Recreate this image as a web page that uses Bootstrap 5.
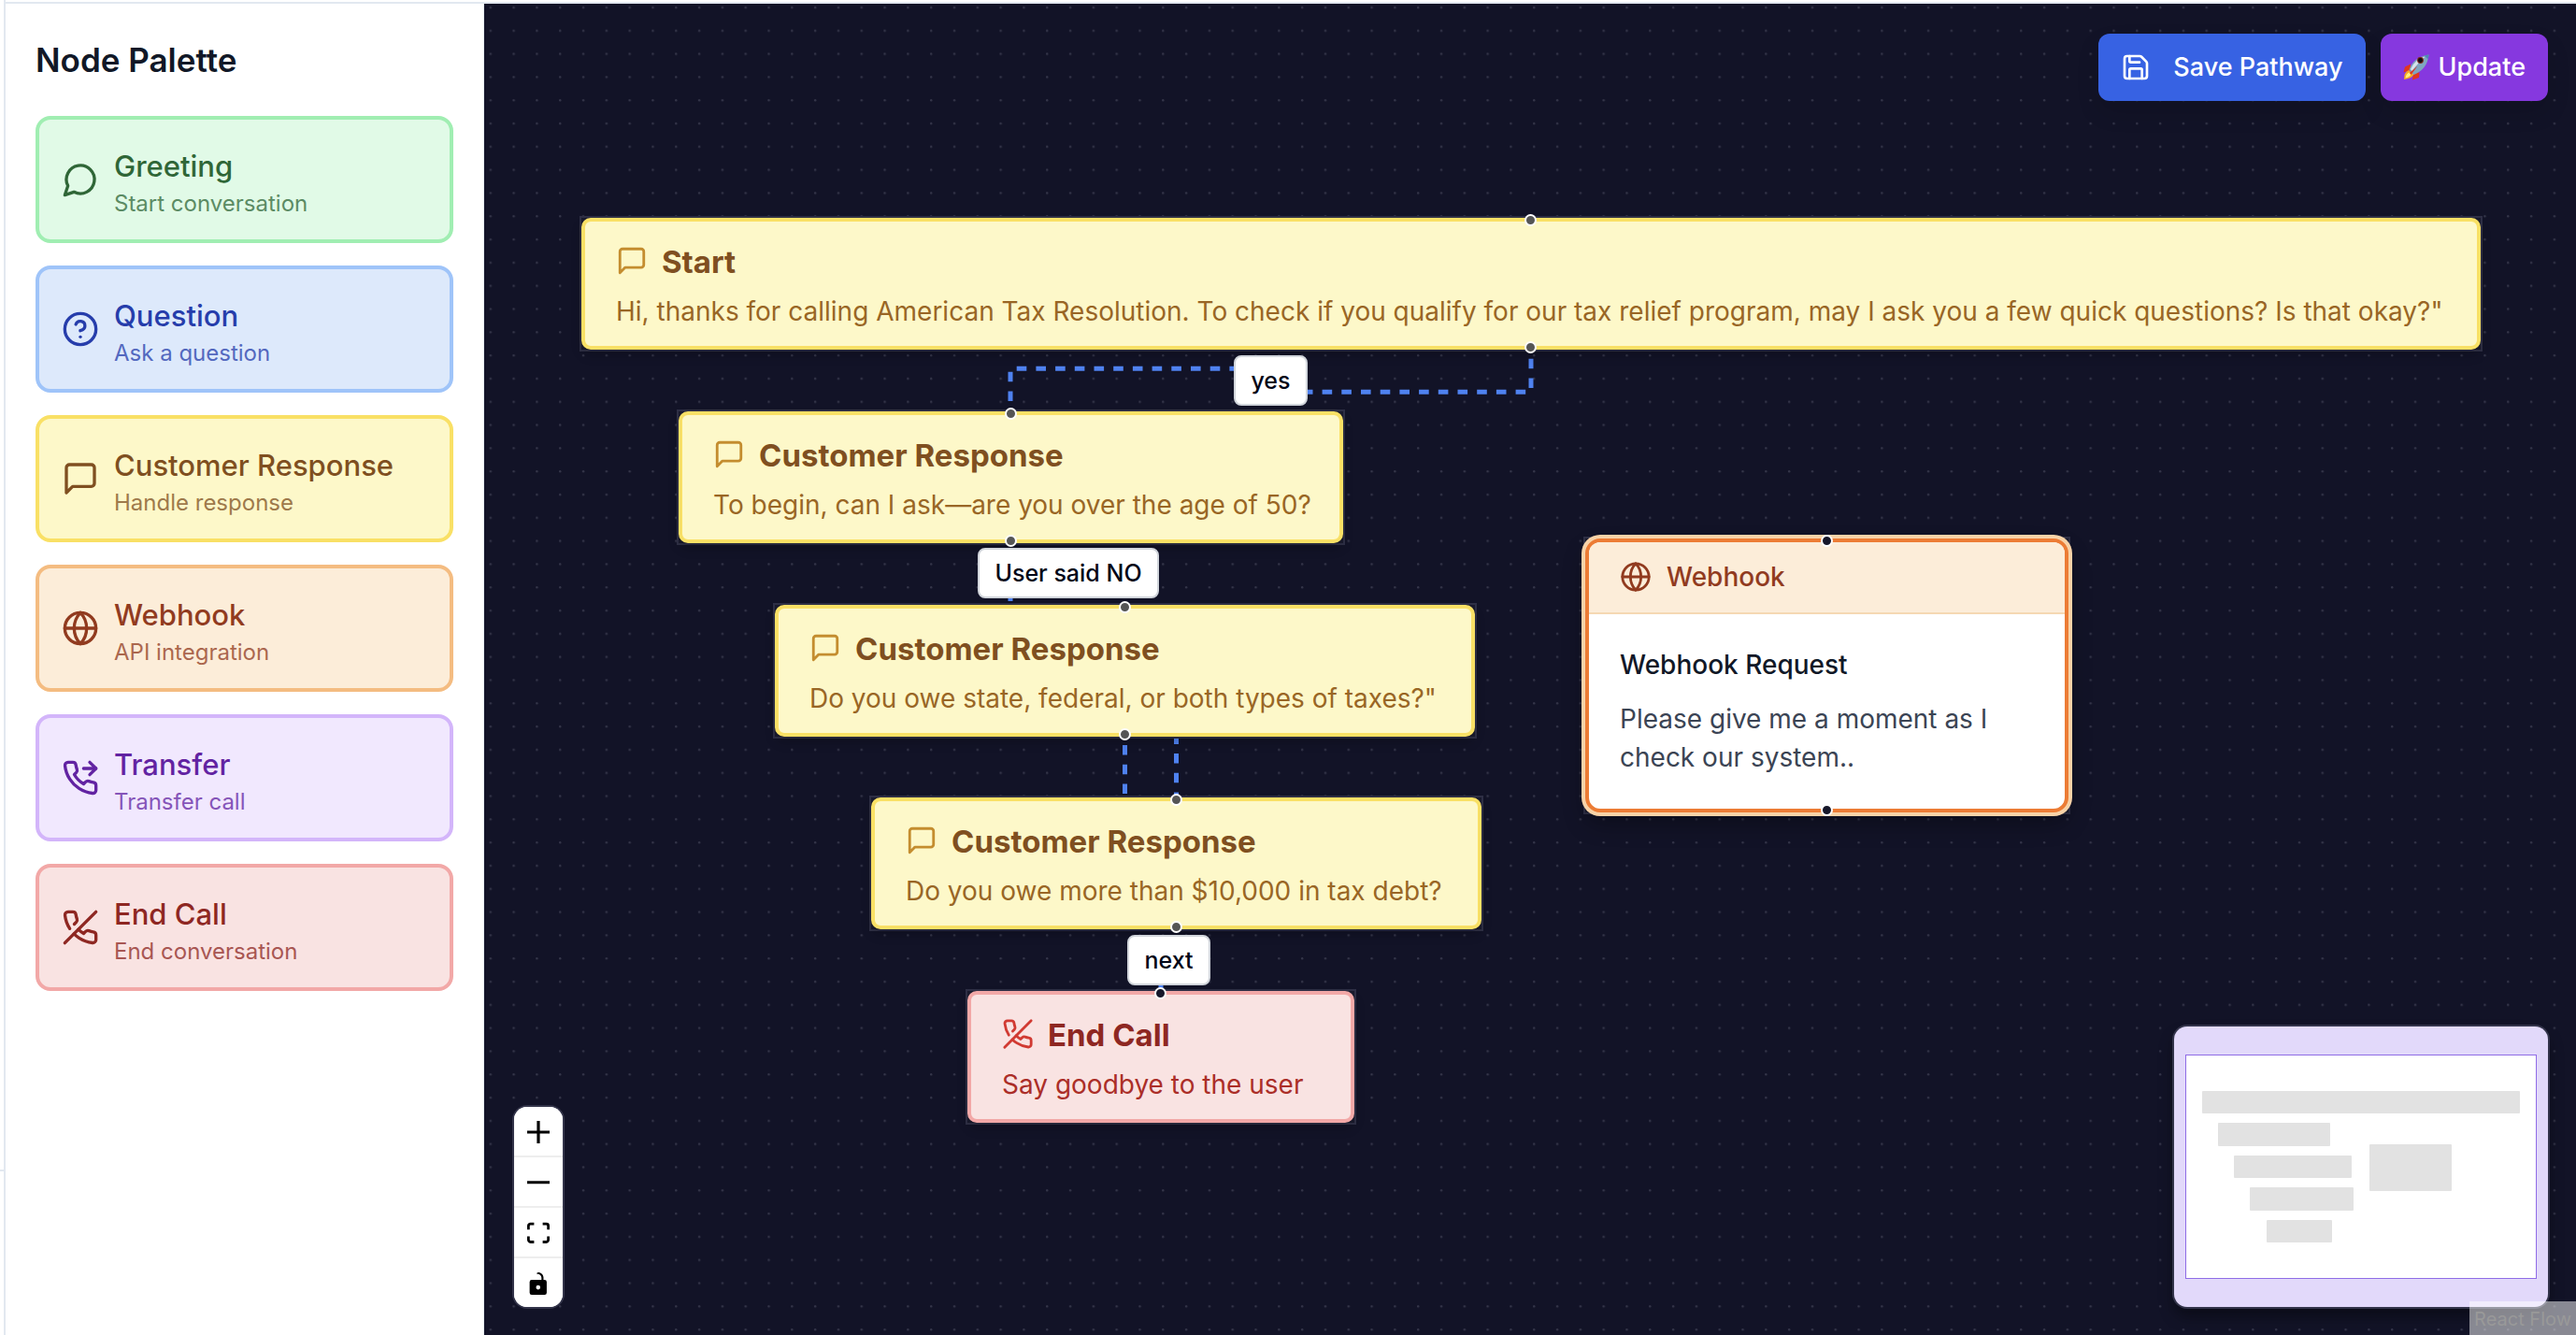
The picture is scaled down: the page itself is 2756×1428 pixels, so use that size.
<!DOCTYPE html>
<html lang="en">
<head>
<meta charset="utf-8">
<meta name="viewport" content="width=device-width, initial-scale=1">
<title>Pathway editor</title>
<link href="https://cdn.jsdelivr.net/npm/bootstrap@5.3.0/dist/css/bootstrap.min.css" rel="stylesheet">
<style>
  body { font-family: Inter, "Liberation Sans", sans-serif; background: #fff; color: #111827; }
  .rail { width: 6px; border-right: 2px solid #e2e8f0; }
  .rail-gap { height: 1253px; border-bottom: 2px solid #e2e8f0; }
  .shell-top { height: 4px; border-bottom: 2px solid #e2e8f0; }
  .ico { fill: none; stroke: currentColor; stroke-width: 2; stroke-linecap: round; stroke-linejoin: round; flex: none; }

  /* Palette */
  .palette { width: 512px; padding: 32px; border-right: 1px solid #e2e8f0; }
  .palette h1 { font-size: 35px; line-height: 56px; font-weight: 600; margin-bottom: 32px; margin-top: 0; }
  .tile { border: 4px solid; border-radius: 16px; min-height: 136px; padding: 20px 24px; gap: 16px; }
  .tile .ico { width: 40px; height: 40px; }
  .tile-copy { padding-top: 3px; }
  .tile-name { font-size: 31px; line-height: 48px; font-weight: 500; }
  .tile-note { font-size: 24px; line-height: 32px; opacity: .75; }

  /* Canvas */
  .board { background: #121327; }
  .wires { inset: 0; }
  .actions { top: 32px; right: 30px; gap: 16px; }
  .act { height: 72px; border: 0; border-radius: 12px; padding: 0 24px; font-size: 27px; font-weight: 500; line-height: 40px; color: #fff; box-shadow: 0 12px 24px rgba(0,0,0,.12); }
  .act .ico { width: 32px; height: 32px; }
  .act-save { background: #3762e3; gap: 24px; }
  .act-update { background: #8638df; gap: 10px; }

  .node { border: 2px solid #2f3046; background: #1a1b2e; }
  .node-card { border: 4px solid; border-radius: 10px; padding: 22px 33px 17px; box-shadow: 0 6px 12px rgba(0,0,0,.2); }
  .node-card .ico { width: 34px; height: 34px; margin-top: 3px; }
  .node-head { gap: 15px; margin-bottom: 13px; }
  .node-title { font-size: 33px; line-height: 40px; font-weight: 700; padding-top: 1px; }
  .node-text { font-size: 28px; line-height: 40px; white-space: nowrap; }
  .n-start { left: 102px; top: 227px; width: 2036px; }
  .n-age { left: 206px; top: 434px; width: 715px; }
  .n-types { left: 309px; top: 641px; width: 753px; }
  .n-debt { left: 412px; top: 847px; width: 657px; }
  .n-end { left: 515px; top: 1054px; width: 418px; }
  .n-hook { left: 1176px; top: 570px; width: 521px; }

  .hook-card { border: 4px solid #ec7c35; border-radius: 16px; box-shadow: 0 0 0 4px #f8d3a8, 0 12px 24px rgba(0,0,0,.3); background: #fff; overflow: hidden; }
  .hook-head { background: #fcedd9; border-bottom: 2px solid #f5d8b3; color: #913b1f; padding: 17px 33px 18px; gap: 16px; font-size: 28px; line-height: 40px; font-weight: 500; }
  .hook-head .ico { width: 34px; height: 34px; }
  .hook-body { padding: 34px 33px; font-size: 28px; line-height: 41px; color: #3b4454; }
  .hook-name { color: #111827; font-weight: 500; margin-bottom: 17px; }

  /* Colour themes shared by palette tiles and nodes */
  .t-green { background: #e1fae7; border-color: #a0eeb2; color: #2f6637; }
  .t-blue { background: #dde9fb; border-color: #9fc4f9; color: #263dab; }
  .t-yellow { background: #fdf8c9; border-color: #f9e065; color: #7f4f20; }
  .t-orange { background: #fcedd9; border-color: #f4bc81; color: #913b1f; }
  .t-purple { background: #f1e8fe; border-color: #d3b5fa; color: #6223a2; }
  .t-red { background: #f9e3e2; border-color: #f2a8a7; color: #8e2722; }
  .t-yellow .node-text { color: #996625; }
  .t-yellow .node-head .ico { color: #c48d2f; }
  .t-red .node-text { color: #ab2e28; }
  .t-red .node-head .ico { color: #d13a32; }

  .port { width: 13px; height: 13px; border: 2px solid #fff; border-radius: 50%; background: #555; left: 50%; margin-left: -7px; }
  .port-in { top: -4px; }
  .port-out { bottom: -4px; }
  .port-dark { background: #16172a; }

  .wire-label { background: #fff; border: 2px solid #d1d5db; border-radius: 8px; height: 54px; line-height: 51px; font-size: 25px; font-weight: 500; color: #020617; text-align: center; }
  .l-yes { left: 802px; top: 376px; width: 79px; }
  .l-no { left: 528px; top: 582px; width: 194px; }
  .l-next { left: 688px; top: 996px; width: 89px; }

  .zoomer { left: 32px; bottom: 30px; width: 52px; border-radius: 14px; box-shadow: 0 0 0 2px #33344a; background: #fff; overflow: hidden; }
  .zoomer button { height: 52px; border: 0; background: #fff; padding: 0; }
  .zoomer button + button { height: 54px; border-top: 2px solid #eee; }
  .zoomer svg { width: 24px; height: 24px; fill: #000; }

  .minimap { right: 30px; bottom: 30px; width: 400px; height: 300px; border-radius: 14px; overflow: hidden; background: #e2d9fa; box-shadow: 0 0 0 2px #33344a, 0 10px 16px rgba(0,0,0,.4); }
  .credit { right: 0; bottom: 0; height: 36px; padding: 0 5px; line-height: 38px; font-size: 20px; color: #999; background: rgba(255,255,255,.5); text-decoration: none; }
</style>
</head>
<body>
<div class="d-flex vh-100 overflow-hidden">
  <div class="rail flex-shrink-0"><div class="rail-gap"></div></div>
  <div class="d-flex flex-column flex-grow-1">
    <div class="shell-top flex-shrink-0"></div>
    <div class="d-flex flex-grow-1">

      <aside class="palette flex-shrink-0">
        <h1>Node Palette</h1>
        <div class="d-flex flex-column gap-4">
          <button type="button" class="tile t-green d-flex align-items-center text-start">
            <svg class="ico" viewBox="0 0 24 24"><path d="M7.9 20A9 9 0 1 0 4 16.1L2 22Z"/></svg>
            <span class="tile-copy"><span class="tile-name d-block">Greeting</span><span class="tile-note d-block">Start conversation</span></span>
          </button>
          <button type="button" class="tile t-blue d-flex align-items-center text-start">
            <svg class="ico" viewBox="0 0 24 24"><circle cx="12" cy="12" r="10"/><path d="M9.09 9a3 3 0 0 1 5.83 1c0 2-3 3-3 3"/><path d="M12 17h.01"/></svg>
            <span class="tile-copy"><span class="tile-name d-block">Question</span><span class="tile-note d-block">Ask a question</span></span>
          </button>
          <button type="button" class="tile t-yellow d-flex align-items-center text-start">
            <svg class="ico" viewBox="0 0 24 24"><path d="M21 15a2 2 0 0 1-2 2H7l-4 4V5a2 2 0 0 1 2-2h14a2 2 0 0 1 2 2z"/></svg>
            <span class="tile-copy"><span class="tile-name d-block">Customer Response</span><span class="tile-note d-block">Handle response</span></span>
          </button>
          <button type="button" class="tile t-orange d-flex align-items-center text-start">
            <svg class="ico" viewBox="0 0 24 24"><circle cx="12" cy="12" r="10"/><path d="M12 2a14.5 14.5 0 0 0 0 20 14.5 14.5 0 0 0 0-20"/><path d="M2 12h20"/></svg>
            <span class="tile-copy"><span class="tile-name d-block">Webhook</span><span class="tile-note d-block">API integration</span></span>
          </button>
          <button type="button" class="tile t-purple d-flex align-items-center text-start">
            <svg class="ico" viewBox="0 0 24 24"><path d="M18 2l4 4-4 4"/><path d="M14 6h8"/><path d="M22 16.92v3a2 2 0 0 1-2.18 2 19.79 19.79 0 0 1-8.63-3.07 19.5 19.5 0 0 1-6-6 19.79 19.79 0 0 1-3.07-8.67A2 2 0 0 1 4.11 2h3a2 2 0 0 1 2 1.72 12.84 12.84 0 0 0 .7 2.81 2 2 0 0 1-.45 2.11L8.09 9.91a16 16 0 0 0 6 6l1.27-1.27a2 2 0 0 1 2.11-.45 12.84 12.84 0 0 0 2.81.7A2 2 0 0 1 22 16.92z"/></svg>
            <span class="tile-copy"><span class="tile-name d-block">Transfer</span><span class="tile-note d-block">Transfer call</span></span>
          </button>
          <button type="button" class="tile t-red d-flex align-items-center text-start">
            <svg class="ico" viewBox="0 0 24 24"><path d="M10.68 13.31a16 16 0 0 0 3.41 2.6l1.27-1.27a2 2 0 0 1 2.11-.45 12.84 12.84 0 0 0 2.81.7 2 2 0 0 1 1.72 2v3a2 2 0 0 1-2.18 2 19.79 19.79 0 0 1-8.63-3.07 19.42 19.42 0 0 1-3.33-2.67m-2.67-3.34a19.79 19.79 0 0 1-3.07-8.63A2 2 0 0 1 4.11 2h3a2 2 0 0 1 2 1.72 12.84 12.84 0 0 0 .7 2.81 2 2 0 0 1-.45 2.11L8.09 9.91"/><path d="M22 2L2 22"/></svg>
            <span class="tile-copy"><span class="tile-name d-block">End Call</span><span class="tile-note d-block">End conversation</span></span>
          </button>
        </div>
      </aside>

      <main class="board position-relative flex-grow-1 overflow-hidden">
        <svg class="wires position-absolute w-100 h-100">
          <defs>
            <pattern id="dots" x="5.6" y="2.8" width="24.81" height="24.81" patternUnits="userSpaceOnUse"><circle cx="1.2" cy="1.2" r="1.2" fill="#35364a"/></pattern>
          </defs>
          <rect width="100%" height="100%" fill="url(#dots)"/>
          <g transform="translate(-518 -4)" fill="none" stroke="#4f82f0" stroke-width="5" stroke-dasharray="10.6 10.1">
            <path d="M1081 441V394.3H1359V419.3H1638V372" stroke-dashoffset="-12"/>
            <path d="M1081 640V643"/>
            <path d="M1203.500 797V851"/>
            <path d="M1258.500 785.300V851"/>
            <path d="M1242 1050V1058"/>
          </g>
        </svg>

        <div class="node n-start position-absolute">
          <div class="node-card t-yellow">
            <div class="node-head d-flex align-items-start">
              <svg class="ico" viewBox="0 0 24 24"><path d="M21 15a2 2 0 0 1-2 2H7l-4 4V5a2 2 0 0 1 2-2h14a2 2 0 0 1 2 2z"/></svg>
              <div class="node-title">Start</div>
            </div>
            <div class="node-text">Hi, thanks for calling American Tax Resolution. To check if you qualify for our tax relief program, may I ask you a few quick questions? Is that okay?"</div>
          </div>
          <span class="port port-in position-absolute"></span><span class="port port-out position-absolute"></span>
        </div>

        <div class="node n-age position-absolute">
          <div class="node-card t-yellow">
            <div class="node-head d-flex align-items-start">
              <svg class="ico" viewBox="0 0 24 24"><path d="M21 15a2 2 0 0 1-2 2H7l-4 4V5a2 2 0 0 1 2-2h14a2 2 0 0 1 2 2z"/></svg>
              <div class="node-title">Customer Response</div>
            </div>
            <div class="node-text">To begin, can I ask—are you over the age of 50?</div>
          </div>
          <span class="port port-in position-absolute"></span><span class="port port-out position-absolute"></span>
        </div>

        <div class="node n-types position-absolute">
          <div class="node-card t-yellow">
            <div class="node-head d-flex align-items-start">
              <svg class="ico" viewBox="0 0 24 24"><path d="M21 15a2 2 0 0 1-2 2H7l-4 4V5a2 2 0 0 1 2-2h14a2 2 0 0 1 2 2z"/></svg>
              <div class="node-title">Customer Response</div>
            </div>
            <div class="node-text">Do you owe state, federal, or both types of taxes?"</div>
          </div>
          <span class="port port-in position-absolute"></span><span class="port port-out position-absolute"></span>
        </div>

        <div class="node n-debt position-absolute">
          <div class="node-card t-yellow">
            <div class="node-head d-flex align-items-start">
              <svg class="ico" viewBox="0 0 24 24"><path d="M21 15a2 2 0 0 1-2 2H7l-4 4V5a2 2 0 0 1 2-2h14a2 2 0 0 1 2 2z"/></svg>
              <div class="node-title">Customer Response</div>
            </div>
            <div class="node-text">Do you owe more than $10,000 in tax debt?</div>
          </div>
          <span class="port port-in position-absolute"></span><span class="port port-out position-absolute"></span>
        </div>

        <div class="node n-end position-absolute">
          <div class="node-card t-red">
            <div class="node-head d-flex align-items-start">
              <svg class="ico" viewBox="0 0 24 24"><path d="M10.68 13.31a16 16 0 0 0 3.41 2.6l1.27-1.27a2 2 0 0 1 2.11-.45 12.84 12.84 0 0 0 2.81.7 2 2 0 0 1 1.72 2v3a2 2 0 0 1-2.18 2 19.79 19.79 0 0 1-8.63-3.07 19.42 19.42 0 0 1-3.33-2.67m-2.67-3.34a19.79 19.79 0 0 1-3.07-8.63A2 2 0 0 1 4.11 2h3a2 2 0 0 1 2 1.72 12.84 12.84 0 0 0 .7 2.81 2 2 0 0 1-.45 2.11L8.09 9.91"/><path d="M22 2L2 22"/></svg>
              <div class="node-title">End Call</div>
            </div>
            <div class="node-text">Say goodbye to the user</div>
          </div>
          <span class="port port-in port-dark position-absolute"></span>
        </div>

        <div class="node n-hook position-absolute">
          <div class="hook-card">
            <div class="hook-head d-flex align-items-center">
              <svg class="ico" viewBox="0 0 24 24"><circle cx="12" cy="12" r="10"/><path d="M12 2a14.5 14.5 0 0 0 0 20 14.5 14.5 0 0 0 0-20"/><path d="M2 12h20"/></svg>
              <div>Webhook</div>
            </div>
            <div class="hook-body">
              <div class="hook-name">Webhook Request</div>
              <div>Please give me a moment as I check our system..</div>
            </div>
          </div>
          <span class="port port-in port-dark position-absolute"></span><span class="port port-out port-dark position-absolute"></span>
        </div>

        <div class="wire-label l-yes position-absolute">yes</div>
        <div class="wire-label l-no position-absolute">User said NO</div>
        <div class="wire-label l-next position-absolute">next</div>

        <div class="actions position-absolute d-flex">
          <button type="button" class="act act-save d-flex align-items-center">
            <svg class="ico" viewBox="0 0 24 24"><path d="M15.2 3a2 2 0 0 1 1.4.6l3.8 3.8a2 2 0 0 1 .6 1.4V19a2 2 0 0 1-2 2H5a2 2 0 0 1-2-2V5a2 2 0 0 1 2-2z"/><path d="M17 21v-7a1 1 0 0 0-1-1H8a1 1 0 0 0-1 1v7"/><path d="M7 3v4a1 1 0 0 0 1 1h7"/></svg>
            <span>Save Pathway</span>
          </button>
          <button type="button" class="act act-update d-flex align-items-center">
            <svg width="28" height="28" viewBox="0 0 28 28">
              <path d="M8 10.500L2 13.500 0.500 19.500 8 17zM17.500 19.500L17 25 10 27.500 11 20z" fill="#e0361f"/>
              <path d="M6 17Q1 19 1 27Q9 26 11.500 21.500z" fill="#f7a823"/>
              <path d="M6.500 19.500Q3 21 2.500 25.500Q7 24.500 8.500 21.500z" fill="#fff07a"/>
              <path d="M6.500 16.500Q11 3 27.500 0.500Q26 16 11.500 22z" fill="#7fa6bf"/>
              <path d="M8 16Q13 5 24.500 2Q17 8 9.500 18z" fill="#d9e6ec"/>
              <path d="M22 1.800Q25 0.800 27.500 0.500Q27.300 3 26.500 5.500Q24.800 3 22 1.800z" fill="#4f86b5"/>
              <circle cx="18.500" cy="6.500" r="3.400" fill="#7e2418"/><circle cx="18.500" cy="6.500" r="2.400" fill="#120b12"/>
              <path d="M15.500 12.500L8.500 22 7 20z" fill="#e0361f"/>
            </svg>
            <span>Update</span>
          </button>
        </div>

        <div class="zoomer position-absolute d-flex flex-column">
          <button type="button" aria-label="Zoom in"><svg viewBox="0 0 32 32"><path d="M32 18.133H18.133V32h-4.266V18.133H0v-4.266h13.867V0h4.266v13.867H32z"/></svg></button>
          <button type="button" aria-label="Zoom out"><svg viewBox="0 0 32 5"><path d="M0 0h32v4.2H0z"/></svg></button>
          <button type="button" aria-label="Fit view"><svg viewBox="0 0 32 30"><path d="M3.692 4.63c0-.53.4-.938.939-.938h5.215V0H4.708C2.13 0 0 2.054 0 4.63v5.216h3.692V4.631zM27.354 0h-5.2v3.692h5.17c.53 0 .984.4.984.939v5.215H32V4.631A4.624 4.624 0 0027.354 0zm.954 24.83c0 .532-.4.94-.939.94h-5.215v3.768h5.215c2.577 0 4.631-2.13 4.631-4.707v-5.139h-3.692v5.139zm-23.677.94c-.531 0-.939-.4-.939-.94v-5.138H0v5.139c0 2.577 2.13 4.707 4.708 4.707h5.138V25.77H4.631z"/></svg></button>
          <button type="button" aria-label="Toggle lock"><svg viewBox="0 0 25 32"><path d="M21.333 10.667H19.81V7.619C19.81 3.429 16.38 0 12.19 0c-4.114 1.828-1.37 2.133.305 2.438 1.676.305 4.42 2.59 4.42 5.181v3.048H3.047A3.056 3.056 0 000 13.714v15.238A3.056 3.056 0 003.048 32h18.285a3.056 3.056 0 003.048-3.048V13.714a3.056 3.056 0 00-3.048-3.047zM12.19 24.533a3.056 3.056 0 01-3.047-3.047 3.056 3.056 0 013.047-3.048 3.056 3.056 0 013.048 3.048 3.056 3.056 0 01-3.048 3.047z"/></svg></button>
        </div>

        <div class="minimap position-absolute">
          <svg class="d-block w-100 h-100" viewBox="0 0 400 300">
            <rect x="12.500" y="30.500" width="375" height="239" fill="#fff" stroke="#8f6ce6"/>
            <g fill="#e2e2e2">
              <rect x="30" y="69" width="340" height="24" rx="1"/>
              <rect x="47" y="103" width="120" height="25" rx="1"/>
              <rect x="64" y="138" width="126" height="24" rx="1"/>
              <rect x="81" y="172" width="111" height="25" rx="1"/>
              <rect x="99" y="207" width="70" height="24" rx="1"/>
              <rect x="209" y="126" width="88" height="50" rx="1"/>
            </g>
          </svg>
        </div>
        <a class="credit position-absolute" href="#">React Flow</a>
      </main>
    </div>
  </div>
</div>
<script src="https://cdn.jsdelivr.net/npm/bootstrap@5.3.0/dist/js/bootstrap.bundle.min.js"></script>
</body>
</html>
